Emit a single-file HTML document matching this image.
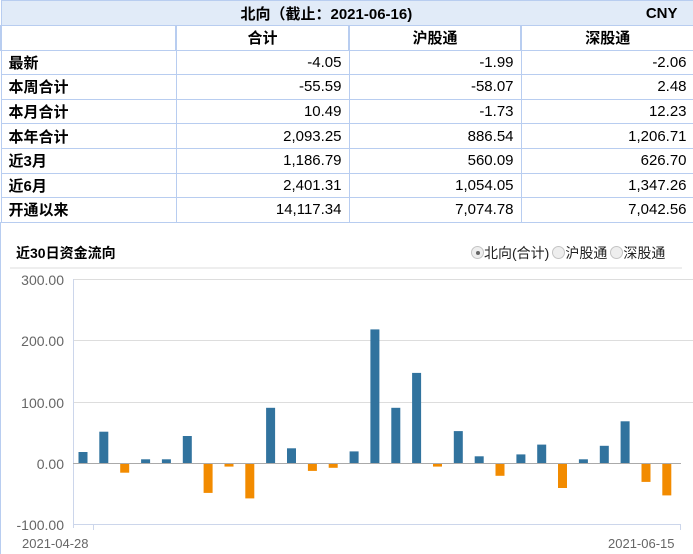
<!DOCTYPE html>
<html><head><meta charset="utf-8"><style>
*{margin:0;padding:0;box-sizing:border-box}
body{width:693px;height:554px;background:#fff;font-family:"Liberation Sans","Noto Sans CJK SC",sans-serif;position:relative;overflow:hidden;color:#000}
table{position:absolute;left:0;top:0;width:693px;border-collapse:collapse;font-size:15px;table-layout:fixed}
td{border:1px solid #b8cdf0;height:24.6px;padding:0 7px;white-space:nowrap}
.c td{border-left:2px solid #b8cdf0}
.h td{background:#e1ebf8;font-weight:bold;height:25px}
.c td{font-weight:bold;text-align:center}
td.l{font-weight:bold;text-align:left}
td.n{text-align:right}
.frame{position:absolute;left:0;top:222px;width:693px;height:332px;border-left:1px solid #b8cdf0}
.title{position:absolute;left:16px;top:243px;font-size:14px;font-weight:bold}
.radio{position:absolute;left:468px;top:243px;font-size:14px;color:#222;white-space:nowrap}
.rb{display:inline-block;width:13px;height:13px;border-radius:50%;border:1px solid #c4c4c4;background:#eee;vertical-align:-1px;position:relative;margin-left:3px}
.rb.on::after{content:"";position:absolute;left:3.5px;top:3.5px;width:4px;height:4px;border-radius:50%;background:#666}
</style></head><body>
<table>
<colgroup><col style="width:175px"><col style="width:173px"><col style="width:172px"><col style="width:173px"></colgroup>
<tr class="h"><td colspan="3" style="text-align:left;padding-left:239px;border-right:none">北向（截止：2021-06-16)</td><td style="text-align:right;padding-right:16px;border-left:none">CNY</td></tr>
<tr class="c"><td class="l"></td><td>合计</td><td>沪股通</td><td>深股通</td></tr>
<tr><td class="l">最新</td><td class="n">-4.05</td><td class="n">-1.99</td><td class="n">-2.06</td></tr>
<tr><td class="l">本周合计</td><td class="n">-55.59</td><td class="n">-58.07</td><td class="n">2.48</td></tr>
<tr><td class="l">本月合计</td><td class="n">10.49</td><td class="n">-1.73</td><td class="n">12.23</td></tr>
<tr><td class="l">本年合计</td><td class="n">2,093.25</td><td class="n">886.54</td><td class="n">1,206.71</td></tr>
<tr><td class="l">近3月</td><td class="n">1,186.79</td><td class="n">560.09</td><td class="n">626.70</td></tr>
<tr><td class="l">近6月</td><td class="n">2,401.31</td><td class="n">1,054.05</td><td class="n">1,347.26</td></tr>
<tr><td class="l">开通以来</td><td class="n">14,117.34</td><td class="n">7,074.78</td><td class="n">7,042.56</td></tr>
</table>
<div class="frame"></div>
<div class="title">近30日资金流向</div>
<div class="radio"><span class="rb on"></span>北向(合计)<span class="rb"></span>沪股通<span class="rb"></span>深股通</div>
<svg style="position:absolute;left:0;top:0" width="693" height="554">
<line x1="10" y1="268" x2="682" y2="268" stroke="#ddd"/>
<g stroke="#ddd" stroke-width="1">
<line x1="73" y1="279.5" x2="693" y2="279.5"/>
<line x1="73" y1="340.5" x2="693" y2="340.5"/>
<line x1="73" y1="402.5" x2="693" y2="402.5"/>
</g>
<line x1="73.5" y1="279" x2="73.5" y2="528" stroke="#ccd6eb"/>
<line x1="73" y1="524.5" x2="681" y2="524.5" stroke="#ccd6eb"/>
<line x1="93.5" y1="524" x2="93.5" y2="530" stroke="#ccd6eb"/>
<line x1="680.5" y1="524" x2="680.5" y2="530" stroke="#ccd6eb"/>
<g font-family="Liberation Sans,sans-serif" font-size="14" fill="#666" text-anchor="end">
<text x="64" y="285">300.00</text><text x="64" y="346">200.00</text><text x="64" y="408">100.00</text><text x="64" y="469">0.00</text><text x="64" y="530">-100.00</text>
</g>
<g font-family="Liberation Sans,sans-serif" font-size="13" fill="#666">
<text x="22" y="548">2021-04-28</text><text x="608" y="548">2021-06-15</text>
</g>
<g id="bars"></g>
<line x1="73" y1="463.5" x2="681" y2="463.5" stroke="#aaa"/>
</svg>
<script>
var v=[18,51,-15,6,6,44,-48,-5,-57,90,24,-12,-7,19,218,90,147,-5,52,11,-20,14,30,-40,6,28,68,-30,-52];
var g=document.getElementById('bars'),s='';
for(var i=0;i<v.length;i++){var x=78.5+i*20.85,h=Math.abs(v[i])*0.613,y=v[i]>0?463-h:463.5;
s+='<rect x="'+x.toFixed(1)+'" y="'+y.toFixed(1)+'" width="9" height="'+h.toFixed(1)+'" fill="'+(v[i]>0?'#31739e':'#f28b00')+'"/>';}
g.innerHTML=s;
</script>
</body></html>
